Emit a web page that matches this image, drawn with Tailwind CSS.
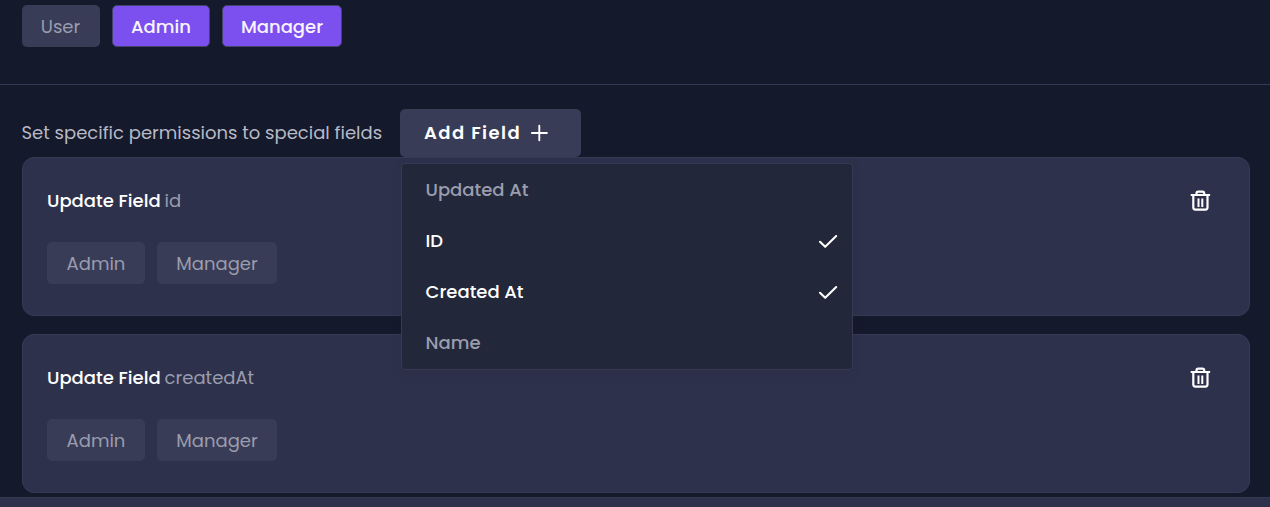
<!DOCTYPE html>
<html lang="en">
<head>
<meta charset="utf-8">
<title>Permissions</title>
<script src="https://cdn.jsdelivr.net/npm/@tailwindcss/browser@4"></script>
</head>
<body class="bg-[#14192b] w-[1270px] h-[507px] overflow-hidden font-['Poppins','Inter',sans-serif] [font-feature-settings:'cv11'] text-[18px] leading-[26px] whitespace-nowrap flex flex-col">
  <div class="flex gap-3 pl-[22px] pt-[5px] h-[84px] shrink-0 items-start">
    <div class="w-[78px] h-[42px] rounded-[5px] bg-[#393c56] text-[#9a9dae] flex items-center justify-center pt-px"><span class="-ml-px">User</span></div>
    <div class="w-[98px] h-[42px] rounded-[5px] bg-[#7b50ee] border border-[#43446c] text-[#f8f4ff] font-medium flex items-center justify-center pt-px"><span>Admin</span></div>
    <div class="w-[120px] h-[42px] rounded-[5px] bg-[#7b50ee] border border-[#43446c] text-[#f8f4ff] font-medium flex items-center justify-center pt-px"><span>Manager</span></div>
  </div>
  <div class="border-t border-[#373a55] pt-6 pl-[21.5px] pr-5 h-[413px] shrink-0">
    <div class="flex items-center h-12">
      <div class="w-[378.5px] shrink-0 text-[#b8bac6]"><span>Set specific permissions to special fields</span></div>
      <div class="relative w-[181px] h-12 rounded-[5px] bg-[#393c56] text-white font-semibold flex items-center pl-6">
        <span class="tracking-[1.4px] w-[106px]">Add Field</span>
        <svg class="w-[18px] h-[18px]" viewBox="0 0 18 18" fill="none" stroke="#fff" stroke-width="1.9" stroke-linecap="round"><path d="M9.3 1.7v14.6M1.9 9h15"/></svg>
        <div class="absolute z-10 left-px top-[54px] w-[452px] h-[207px] rounded-[4px] bg-[#23273a] border border-[#373a55] shadow-[0_4px_12px_rgba(30,30,60,0.12)] font-medium">
          <div class="h-[51px] flex items-center pl-[23.5px] text-[#9a9dae]"><span>Updated At</span></div>
          <div class="h-[51px] flex items-center justify-between pl-[23.5px] pr-[13px] text-white"><span>ID</span><svg class="w-[22px] h-[22px]" viewBox="0 0 22 22" fill="none" stroke="#fff" stroke-width="2.1" stroke-linecap="round" stroke-linejoin="round"><path d="M3 11.8l5.2 5L19.2 6.1"/></svg></div>
          <div class="h-[51px] flex items-center justify-between pl-[23.5px] pr-[13px] text-white"><span>Created At</span><svg class="w-[22px] h-[22px]" viewBox="0 0 22 22" fill="none" stroke="#fff" stroke-width="2.1" stroke-linecap="round" stroke-linejoin="round"><path d="M3 11.8l5.2 5L19.2 6.1"/></svg></div>
          <div class="h-[51px] flex items-center pl-[23.5px] text-[#9a9dae]"><span>Name</span></div>
        </div>
      </div>
    </div>
    <div class="flex flex-col gap-[18px] ml-[0.5px]">
      <div class="h-[159px] rounded-xl bg-[#2e314b] border border-[#373a55] pl-6 pr-[37px] pt-[30px]">
        <div class="flex justify-between items-center h-[26px]">
          <div class="flex gap-1"><span class="text-white font-medium">Update Field</span><span class="text-[#9a9dae]">id</span></div>
          <svg class="w-6 h-6" viewBox="0 0 24 24" fill="none" stroke="#fff" stroke-width="2.2"><path d="M2.7 6h19.4" stroke-width="2"/><path d="M5.3 6v12.6q0 2 2 2h10.2q2 0 2-2V6"/><path d="M8.5 5.8V4.3q0-1.7 1.8-1.7h4.1q1.8 0 1.8 1.7v1.5"/><path d="M10.5 9.5v8.5M14.3 9.5v8.5" stroke-width="2"/></svg>
        </div>
        <div class="flex gap-3 mt-7 text-[#9a9dae]">
          <div class="w-[98px] h-[42px] rounded-[5px] bg-[#393c56] flex items-center justify-center pt-px"><span>Admin</span></div>
          <div class="w-[120px] h-[42px] rounded-[5px] bg-[#393c56] flex items-center justify-center pt-px"><span>Manager</span></div>
        </div>
      </div>
      <div class="h-[159px] rounded-xl bg-[#2e314b] border border-[#373a55] pl-6 pr-[37px] pt-[30px]">
        <div class="flex justify-between items-center h-[26px]">
          <div class="flex gap-1"><span class="text-white font-medium">Update Field</span><span class="text-[#9a9dae]">createdAt</span></div>
          <svg class="w-6 h-6" viewBox="0 0 24 24" fill="none" stroke="#fff" stroke-width="2.2"><path d="M2.7 6h19.4" stroke-width="2"/><path d="M5.3 6v12.6q0 2 2 2h10.2q2 0 2-2V6"/><path d="M8.5 5.8V4.3q0-1.7 1.8-1.7h4.1q1.8 0 1.8 1.7v1.5"/><path d="M10.5 9.5v8.5M14.3 9.5v8.5" stroke-width="2"/></svg>
        </div>
        <div class="flex gap-3 mt-7 text-[#9a9dae]">
          <div class="w-[98px] h-[42px] rounded-[5px] bg-[#393c56] flex items-center justify-center pt-px"><span>Admin</span></div>
          <div class="w-[120px] h-[42px] rounded-[5px] bg-[#393c56] flex items-center justify-center pt-px"><span>Manager</span></div>
        </div>
      </div>
    </div>
  </div>
  <div class="h-[10px] shrink-0 bg-[#2e314b] border-t border-[#373a55]"></div>
</body>
</html>
